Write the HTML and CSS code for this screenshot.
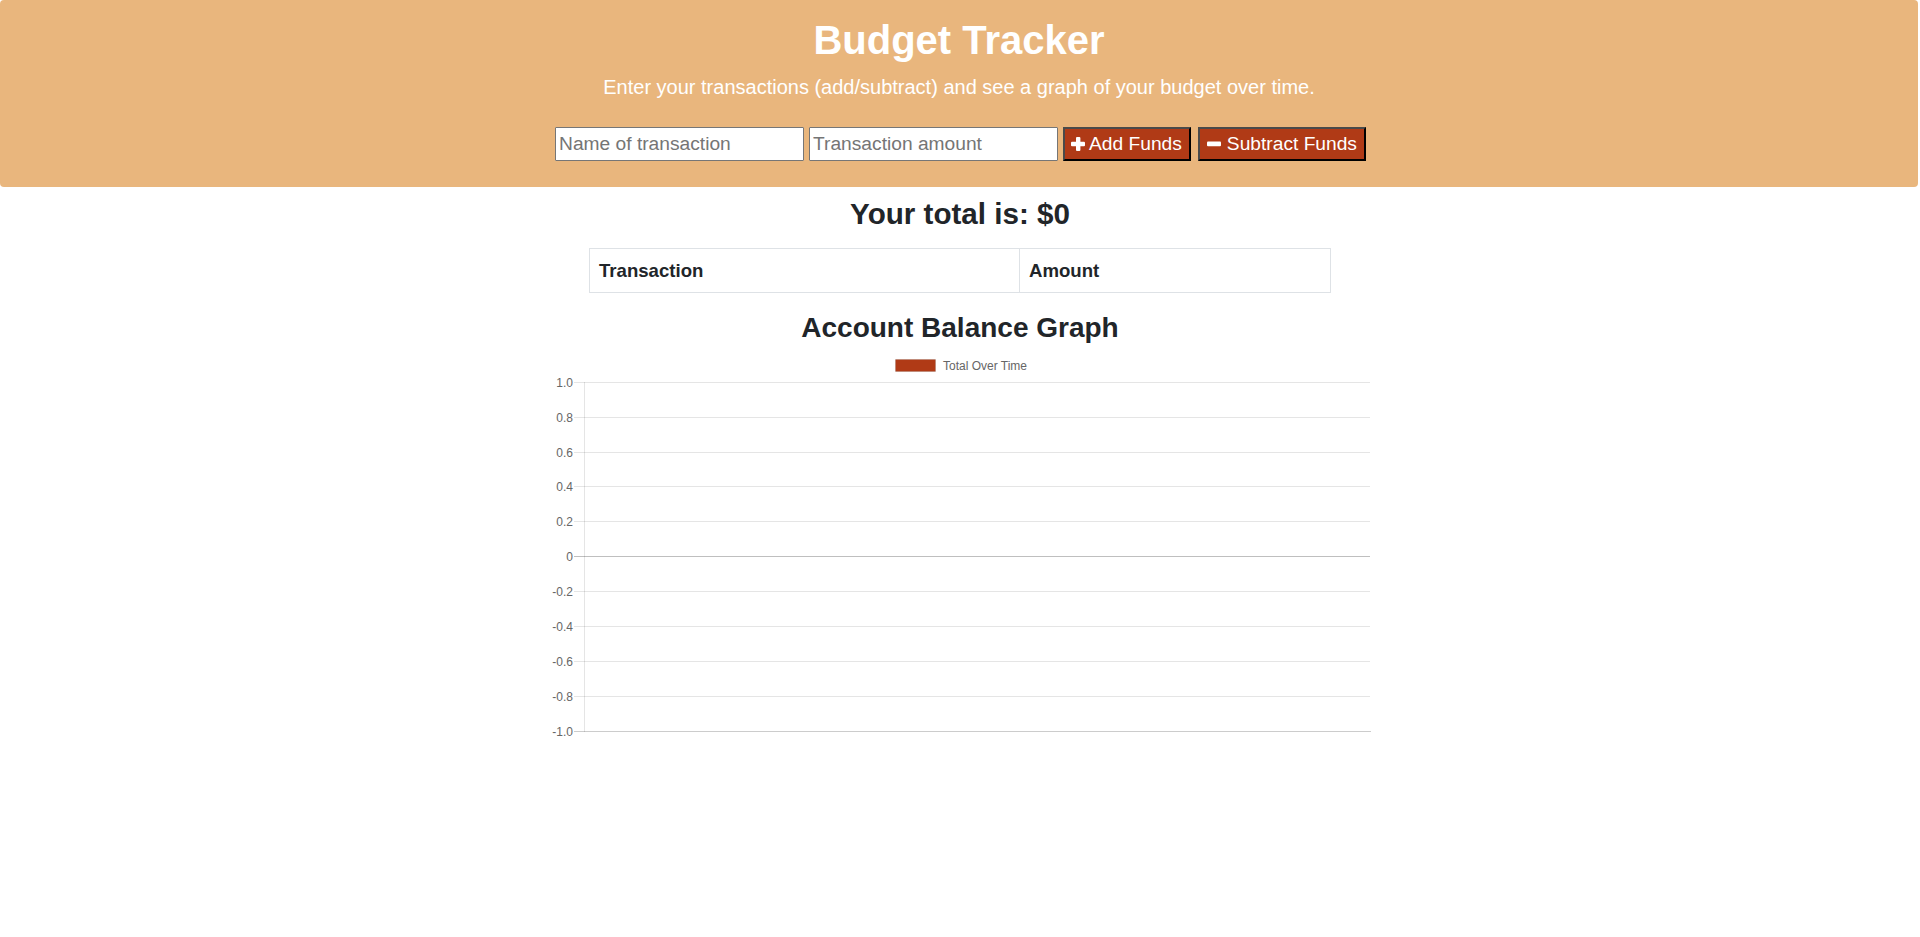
FILE: index.html
```html
<!DOCTYPE html>
<html lang="en">
<head>
<meta charset="utf-8">
<title>Budget Tracker</title>
<link rel="stylesheet" href="styles.css">
</head>
<body>
<header class="hero">
  <h1 class="hero-title">Budget Tracker</h1>
  <p class="hero-lead">Enter your transactions (add/subtract) and see a graph of your budget over time.</p>
  <div class="form-row">
    <input class="field" type="text" placeholder="Name of transaction">
    <input class="field" type="number" placeholder="Transaction amount">
    <button class="btn btn-add" type="button"><svg class="icon" viewBox="0 0 14 14" width="14" height="14"><rect x="5" y="0" width="4.4" height="14" rx="1" fill="#fff"/><rect x="0" y="4.8" width="14" height="4.4" rx="1" fill="#fff"/></svg>Add Funds</button>
    <button class="btn btn-sub" type="button"><svg class="icon" viewBox="0 0 14 14" width="14" height="14"><rect x="0" y="4.6" width="14" height="4.6" rx="1" fill="#fff"/></svg>Subtract Funds</button>
  </div>
</header>

<main class="content">
  <h2 class="total">Your total is: $0</h2>
  <table class="tx-table">
    <thead>
      <tr><th class="col-name">Transaction</th><th class="col-amount">Amount</th></tr>
    </thead>
    <tbody></tbody>
  </table>
  <h2 class="graph-title">Account Balance Graph</h2>
  <svg class="chart" width="840" height="400" viewBox="0 0 840 400">
    <g transform="translate(0,-2)">
    <g class="legend">
      <rect x="355.5" y="16.5" width="40" height="12" fill="#b03a16" stroke="rgba(0,0,0,0.1)" stroke-width="1"/>
      <text x="403" y="27" class="chart-text">Total Over Time</text>
    </g>
    <g class="grid" stroke="rgba(0,0,0,0.1)" stroke-width="1">
      <line x1="34" y1="39.5" x2="830" y2="39.5"/>
      <line x1="34" y1="74.5" x2="830" y2="74.5"/>
      <line x1="34" y1="109.5" x2="830" y2="109.5"/>
      <line x1="34" y1="143.5" x2="830" y2="143.5"/>
      <line x1="34" y1="178.5" x2="830" y2="178.5"/>
      <line x1="34" y1="213.5" x2="830" y2="213.5" stroke="rgba(0,0,0,0.25)"/>
      <line x1="34" y1="248.5" x2="830" y2="248.5"/>
      <line x1="34" y1="283.5" x2="830" y2="283.5"/>
      <line x1="34" y1="318.5" x2="830" y2="318.5"/>
      <line x1="34" y1="353.5" x2="830" y2="353.5"/>
      <line x1="34" y1="388.5" x2="831" y2="388.5" stroke="rgba(0,0,0,0.2)"/>
      <line x1="44.5" y1="39" x2="44.5" y2="389"/>
    </g>
    <g class="ticks chart-text" text-anchor="end">
      <text x="33" y="43.5">1.0</text>
      <text x="33" y="78.5">0.8</text>
      <text x="33" y="113.5">0.6</text>
      <text x="33" y="147.5">0.4</text>
      <text x="33" y="182.5">0.2</text>
      <text x="33" y="217.5">0</text>
      <text x="33" y="252.5">-0.2</text>
      <text x="33" y="287.5">-0.4</text>
      <text x="33" y="322.5">-0.6</text>
      <text x="33" y="357.5">-0.8</text>
      <text x="33" y="392.5">-1.0</text>
    </g>
    </g>
  </svg>
</main>
</body>
</html>
```
FILE: styles.css
```css
* { box-sizing: border-box; }

html, body {
  margin: 0;
  padding: 0;
  background: #fff;
}

body {
  font-family: "Liberation Sans", Arial, sans-serif;
  color: #212529;
}

.hero {
  background: #e9b67d;
  border-radius: 4px;
  margin: 0 2px 0 0;
  padding: 16px 0 26px;
  text-align: center;
  color: #fff;
}

.hero-title {
  margin: 0;
  font-size: 40px;
  line-height: 48px;
  font-weight: bold;
}

.hero-lead {
  margin: 8px 0 0;
  font-size: 20px;
  line-height: 30px;
}

.form-row {
  margin-top: 25px;
  padding-left: 3px;
  display: flex;
  justify-content: center;
  gap: 5px;
}

.field {
  width: 249px;
  height: 34px;
  padding: 1px 3px;
  border: 1px solid #767676;
  border-radius: 1px;
  background: #fff;
  font-family: "Liberation Sans", Arial, sans-serif;
  font-size: 19.2px;
  color: #212529;
  -moz-appearance: textfield;
}
.field::-webkit-outer-spin-button,
.field::-webkit-inner-spin-button { -webkit-appearance: none; margin: 0; }
.field::placeholder { color: #757575; }

.btn {
  height: 34px;
  padding: 0 6px;
  display: flex;
  align-items: center;
  gap: 4px;
  background: #b03a16;
  color: #fff;
  border: 2px outset #4a4a4a;
  font-family: "Liberation Sans", Arial, sans-serif;
  font-size: 19.2px;
  cursor: pointer;
}

.btn-add {
  padding: 0 7px 0 6px;
}

.btn-sub {
  margin-left: 2px;
  padding: 0 7px 0 7px;
  gap: 6px;
}

.icon { display: block; flex: none; }

.content {
  display: flex;
  flex-direction: column;
  align-items: center;
}

.total {
  margin: 9px 0 0;
  font-size: 29.6px;
  line-height: 36px;
  font-weight: bold;
}

.tx-table {
  margin-top: 16px;
  width: 742px;
  border-collapse: collapse;
}

.tx-table th {
  border: 1px solid #dee2e6;
  padding: 10px 9px;
  text-align: left;
  font-size: 18.6px;
  line-height: 23px;
  font-weight: bold;
}

.col-name { width: 430px; }

.graph-title {
  margin: 18px 0 0;
  font-size: 28px;
  line-height: 34px;
  font-weight: bold;
}

.chart {
  display: block;
}

.chart-text {
  font-family: "Liberation Sans", Arial, sans-serif;
  font-size: 12px;
  fill: #666;
}
```
